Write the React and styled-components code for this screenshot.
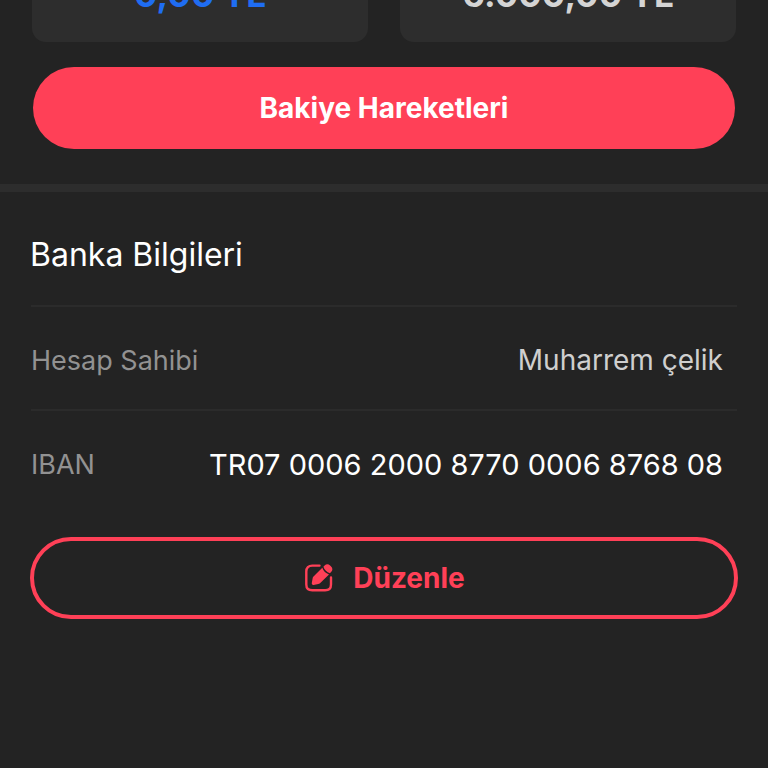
import styled, { createGlobalStyle } from "styled-components";

const details = [
  { label: "Hesap Sahibi", value: "Muharrem çelik", color: "#cfcfcf", size: 28 },
  { label: "IBAN", value: "TR07 0006 2000 8770 0006 8768 08", color: "#ffffff", size: 29 },
];

const EditIcon = () => (
  <svg width="28" height="28" viewBox="0 0 28 28" fill="none" aria-hidden="true">
    <path
      d="M14.500 1.600H7.300c-3.800 0-6 2.100-6 5.900v13c0 3.700 2.200 5.800 6 5.800h12.800c3.700 0 5.900-2.100 5.900-5.800V13.500"
      stroke="currentColor"
      strokeWidth="2.4"
      strokeLinecap="round"
    />
    <path
      d="M17.300 3.800 8.500 12.600c-.5.500-.8 1.100-.9 1.800l-.8 4.700c-.2 1.200.6 2 1.800 1.800l4.600-.8c.7-.1 1.300-.4 1.800-.9l9-8.800c-3.200-1-5.600-3.400-6.700-6.600Z"
      fill="currentColor"
    />
    <path
      d="m18.400 2.800 1.200-1.200c1.700-1.700 3.800-1.700 5.500 0l1 1c1.700 1.700 1.700 3.800 0 5.500l-1.200 1.200c-3.100-.9-5.500-3.300-6.500-6.500Z"
      fill="currentColor"
    />
  </svg>
);

export default () => (
  <Page>
    <GlobalStyle />
    <Balances>
      <Balance $color="#1f6df2">0,00 TL</Balance>
      <Balance $color="#d4d4d4">6.000,00 TL</Balance>
    </Balances>
    <Actions>
      <PrimaryButton type="button">Bakiye Hareketleri</PrimaryButton>
    </Actions>
    <Bank>
      <Title>Banka Bilgileri</Title>
      <Details>
        {details.map((item) => (
          <Row key={item.label}>
            <Label>{item.label}</Label>
            <Value $color={item.color} $size={item.size}>
              {item.value}
            </Value>
          </Row>
        ))}
      </Details>
      <OutlineButton type="button">
        <EditIcon />
        Düzenle
      </OutlineButton>
    </Bank>
  </Page>
);

const GlobalStyle = createGlobalStyle`
  * {
    box-sizing: border-box;
  }

  body {
    margin: 0;
    background: #232323;
    font-family: Inter, "Liberation Sans", sans-serif;
  }
`;

const Page = styled.main`
  min-height: 100vh;
  background: #232323;
  color: #ffffff;
`;

const Balances = styled.section`
  display: grid;
  grid-template-columns: 1fr 1fr;
  gap: 32px;
  padding: 0 32px;
`;

const Balance = styled.div`
  display: flex;
  height: 42px;
  align-items: flex-end;
  justify-content: center;
  padding-bottom: 24px;
  overflow: hidden;
  border-radius: 0 0 14px 14px;
  background: #2d2d2d;
  color: ${(props) => props.$color};
  font-size: 35px;
  font-weight: 700;
  line-height: 48px;
`;

const Actions = styled.div`
  padding: 25px 33px 35px;
  border-bottom: 8px solid #2d2d2d;
`;

const Button = styled.button`
  display: flex;
  width: 100%;
  height: 82px;
  align-items: center;
  justify-content: center;
  gap: 20px;
  border: 0;
  border-radius: 41px;
  font-family: inherit;
  font-size: 28px;
  font-weight: 700;
  cursor: pointer;
`;

const PrimaryButton = styled(Button)`
  background: #ff4057;
  color: #ffffff;
`;

const Bank = styled.section`
  padding: 42px 30px;
`;

const Title = styled.h2`
  margin: 0;
  padding-bottom: 29px;
  font-size: 32px;
  font-weight: 400;
  line-height: 42px;
`;

const Details = styled.dl`
  margin: 0;
`;

const Row = styled.div`
  display: flex;
  height: 104px;
  align-items: center;
  justify-content: space-between;
  margin: 0 1px;
  padding: 4px 14px 0 0;
  border-top: 2px solid #2b2b2b;
`;

const Label = styled.dt`
  color: #929292;
  font-size: 27px;
`;

const Value = styled.dd`
  margin: 0;
  color: ${(props) => props.$color};
  font-size: ${(props) => props.$size}px;
`;

const OutlineButton = styled(Button)`
  margin-top: 24px;
  padding-left: 8px;
  border: 4px solid #ff4057;
  background: transparent;
  color: #ff4057;
`;
